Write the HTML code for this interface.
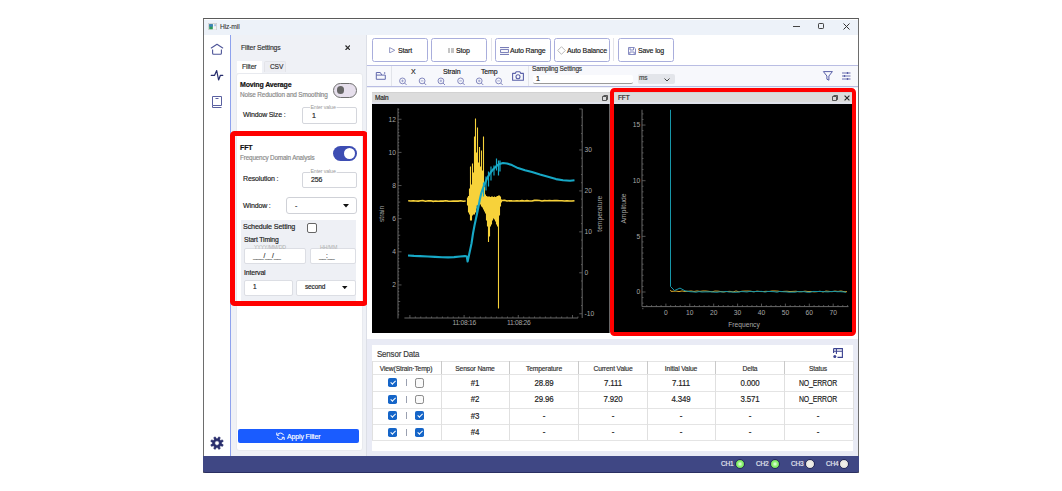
<!DOCTYPE html>
<html><head><meta charset="utf-8">
<style>
*{box-sizing:border-box;margin:0;padding:0}
html,body{width:1062px;height:491px;overflow:hidden;background:#fff;font-family:"Liberation Sans",sans-serif;color:#222}
.a{position:absolute}
.t{position:absolute;white-space:nowrap;line-height:1;letter-spacing:-0.15px;-webkit-text-stroke:0.18px currentColor}
#win{left:203px;top:18px;width:655.8px;height:455px;border:1px solid #6d6d6d;border-top-color:#5a5a5a;background:#fff}
#title{left:204px;top:20px;width:654px;height:15px;background:#edf2f9}
#navline{left:230px;top:35px;width:1px;height:421px;background:#8ea2ee}
#fpanel{left:231px;top:35px;width:136px;height:421px;background:#eff1f6;border-right:1px solid #dcdfe7}
#main{left:367px;top:35px;width:491px;height:421px;background:#eef0f6}
#status{left:203px;top:456px;width:655.8px;height:16.5px;background:#3f4784;border-bottom:1px solid #2a2f62;border-radius:0 0 3px 3px}
.btn{background:#fff;border:1px solid #a9aedc;border-radius:2.5px}
.tb{font-size:7.6px;color:#1a1a1a;transform:scaleX(0.92);transform-origin:left;margin-top:0.1px}
.zi{width:6.2px;height:6.2px;border:1px solid #7d82bb;border-radius:50%}
.zi:before{content:"";position:absolute;left:1.1px;top:1.1px;width:2px;height:2px;border:0.8px solid #9da1cc;border-radius:50%}
.zi:after{content:"";position:absolute;left:4.6px;top:5.2px;width:2.6px;height:1px;background:#7d82bb;transform:rotate(45deg)}
.al{font-family:"Liberation Sans",sans-serif;font-size:6.7px;fill:#a8a8a8}
.cbon{width:9px;height:9px;background:#1565c8;border-radius:1.8px}
.cbon:after{content:"";position:absolute;left:2.1px;top:1.1px;width:4px;height:2.2px;border-left:1.1px solid #fff;border-bottom:1.1px solid #fff;transform:rotate(-45deg) translate(-0.5px,1.5px)}
.cboff{width:9.3px;height:9.3px;background:#fafafa;border:1px solid #8a8a8a;border-radius:2.2px}
</style></head><body>
<div id="win" class="a"></div>
<div id="title" class="a"></div>
<div id="navline" class="a"></div>
<div id="fpanel" class="a"></div>
<div id="main" class="a"></div>
<div id="status" class="a"></div>
<!-- title content -->
<svg class="a" style="left:207.5px;top:22.5px" width="9" height="7.5" viewBox="0 0 9 7.5"><rect x="0.4" y="0.4" width="8.2" height="6.7" fill="#f4f4f4" stroke="#cfcfcf" stroke-width="0.8"/><rect x="1.2" y="1.2" width="3.6" height="5.1" fill="#2f9a5a"/><rect x="1.2" y="1.2" width="3.6" height="2.4" fill="#3d7fc0"/><rect x="6.6" y="1.2" width="0.9" height="2" fill="#5a8fd0"/></svg>
<div class="t" style="left:219.5px;top:23px;font-size:7.3px;color:#333;-webkit-text-stroke:0.1px currentColor;transform:scaleX(0.917);transform-origin:left">Hiz-mil</div>
<div class="a" style="left:793px;top:26px;width:7px;height:1px;background:#444"></div>
<div class="a" style="left:817.8px;top:22.8px;width:6.4px;height:6.4px;border:1px solid #444;border-radius:1.2px"></div>
<svg class="a" style="left:842.5px;top:22.8px" width="7" height="7" viewBox="0 0 7 7"><path d="M0.5 0.5L6.5 6.5M6.5 0.5L0.5 6.5" stroke="#333" stroke-width="1"/></svg>


<!-- nav icons -->
<svg class="a" style="left:204px;top:38px" width="26" height="74" viewBox="204 38 26 74">
<path d="M211.3 48L217 44.2L222.7 48" fill="none" stroke="#4e5598" stroke-width="1.1" stroke-linejoin="round" stroke-linecap="round"/>
<path d="M212.6 49.5V53.3Q212.6 54.3 213.6 54.3H220.4Q221.4 54.3 221.4 53.3V49.5" fill="none" stroke="#4e5598" stroke-width="1.1"/>
<path d="M211.2 75.3H214.6L216.7 70.6L218.6 80L220.4 75.3H222.8" fill="none" stroke="#262c6c" stroke-width="1.2" stroke-linejoin="round" stroke-linecap="round"/>
<path d="M212.5 96.5H221.5V105.5H212.5Z" fill="none" stroke="#5a60a0" stroke-width="1"/>
<path d="M212.5 105.5V107.5H221.5" fill="none" stroke="#5a60a0" stroke-width="1"/>
<path d="M215.5 98.5H218.5" fill="none" stroke="#5a60a0" stroke-width="1"/>
</svg>
<svg class="a" style="left:209px;top:435px" width="16" height="16" viewBox="209 435 16 16"><path fill="#282d6c" fill-rule="evenodd" stroke="#282d6c" stroke-width="0.7" stroke-linejoin="round" d="M221.44 443.80 L223.17 444.79 L222.56 446.27 L220.64 445.75 L219.65 446.74 L220.17 448.66 L218.69 449.27 L217.70 447.54 L216.30 447.54 L215.31 449.27 L213.83 448.66 L214.35 446.74 L213.36 445.75 L211.44 446.27 L210.83 444.79 L212.56 443.80 L212.56 442.40 L210.83 441.41 L211.44 439.93 L213.36 440.45 L214.35 439.46 L213.83 437.54 L215.31 436.93 L216.30 438.66 L217.70 438.66 L218.69 436.93 L220.17 437.54 L219.65 439.46 L220.64 440.45 L222.56 439.93 L223.17 441.41 L221.44 442.40ZM219.30 443.10A2.3 2.3 0 1 0 214.70 443.10A2.3 2.3 0 1 0 219.30 443.10Z"/></svg>

<!-- filter panel -->
<div class="t" style="left:240.7px;top:43.66px;font-size:7.41px;color:#333;transform:scaleX(0.917);transform-origin:left">Filter Settings</div>
<svg class="a" style="left:344.8px;top:44.5px" width="5.5" height="5.5" viewBox="0 0 5.5 5.5"><path d="M0.5 0.5L5 5M5 0.5L0.5 5" stroke="#2a2a2a" stroke-width="1.2"/></svg>
<div class="a" style="left:237px;top:60.7px;width:25.2px;height:12.5px;background:#fff"></div>
<div class="t" style="left:242.3px;top:63.06px;font-size:7.52px;color:#333;transform:scaleX(0.917);transform-origin:left">Filter</div>
<div class="a" style="left:263.9px;top:60.7px;width:22.4px;height:11.8px;background:#edeef3;border:1px solid #e3e4e9;border-bottom:0;border-radius:2px 2px 0 0"></div>
<div class="t" style="left:269.6px;top:63.08px;font-size:7.19px;color:#333;transform:scaleX(0.917);transform-origin:left">CSV</div>
<div class="a" style="left:236px;top:72.5px;width:127px;height:378.5px;background:#fff;border:1px solid #e8eaef;border-radius:3px"></div>

<div class="t" style="left:240px;top:80.5px;font-size:7px;font-weight:bold;color:#111">Moving Average</div>
<div class="t" style="left:240.2px;top:90.68px;font-size:6.98px;color:#8a8a8a;transform:scaleX(0.917);transform-origin:left">Noise Reduction and Smoothing</div>
<div class="a" style="left:332.8px;top:82.9px;width:24.2px;height:14.7px;border-radius:7.4px;background:#e6dfec;border:1.4px solid #6e6e6e"></div>
<div class="a" style="left:336.5px;top:86.3px;width:7.4px;height:7.4px;border-radius:50%;background:#666"></div>
<div class="t" style="left:242.7px;top:111.25px;font-size:7.63px;color:#222;transform:scaleX(0.917);transform-origin:left">Window Size :</div>
<div class="a" style="left:302px;top:107px;width:55px;height:17px;border:1px solid #d4d6dc;border-radius:2px;background:#fff"></div>
<div class="t" style="left:310px;top:104.64px;font-size:5.78px;color:#999;background:#fff;padding:0 0.5px;-webkit-text-stroke:0;transform:scaleX(0.917);transform-origin:left">Enter value</div>
<div class="t" style="left:312px;top:111.65px;font-size:7.63px;color:#222;transform:scaleX(0.917);transform-origin:left">1</div>

<!-- FFT section -->
<div class="t" style="left:240px;top:143.5px;font-size:7px;font-weight:bold;color:#111">FFT</div>
<div class="t" style="left:240.2px;top:155.29px;font-size:6.87px;color:#8a8a8a;transform:scaleX(0.917);transform-origin:left">Frequency Domain Analysis</div>
<div class="a" style="left:333px;top:145.6px;width:24px;height:15px;border-radius:7.5px;background:#3d4db3"></div>
<div class="a" style="left:343.5px;top:147.6px;width:11px;height:11px;border-radius:50%;background:#fff"></div>
<div class="t" style="left:243px;top:174.65px;font-size:7.63px;color:#222;transform:scaleX(0.917);transform-origin:left">Resolution :</div>
<div class="a" style="left:302px;top:172px;width:55px;height:16px;border:1px solid #d4d6dc;border-radius:2px;background:#fff"></div>
<div class="t" style="left:310px;top:169.04px;font-size:5.78px;color:#999;background:#fff;padding:0 0.5px;-webkit-text-stroke:0;transform:scaleX(0.917);transform-origin:left">Enter value</div>
<div class="t" style="left:311px;top:176.15px;font-size:7.63px;color:#222;transform:scaleX(0.917);transform-origin:left">256</div>
<div class="t" style="left:243px;top:201.65px;font-size:7.63px;color:#222;transform:scaleX(0.917);transform-origin:left">Window :</div>
<div class="a" style="left:286px;top:197px;width:71px;height:17px;border:1px solid #cfd1d7;border-radius:3px;background:#fff"></div>
<div class="t" style="left:295px;top:201.65px;font-size:7.63px;color:#222;transform:scaleX(0.917);transform-origin:left">-</div>
<svg class="a" style="left:343.2px;top:204.3px" width="6" height="3.5" viewBox="0 0 7 4"><path d="M0 0H7L3.5 4Z" fill="#111"/></svg>

<div class="a" style="left:241px;top:220px;width:115px;height:81px;background:#eef0f5"></div>
<div class="t" style="left:243px;top:223.44px;font-size:7.85px;color:#222;transform:scaleX(0.917);transform-origin:left">Schedule Setting</div>
<div class="a" style="left:307px;top:223px;width:10px;height:10px;border:1.2px solid #666;border-radius:2px;background:#fff"></div>
<div class="t" style="left:244px;top:236.16px;font-size:7.41px;color:#222;transform:scaleX(0.917);transform-origin:left">Start Timing</div>
<div class="a" style="left:244px;top:248px;width:62px;height:16px;border:1px solid #dcdee4;border-radius:2px;background:#fff"></div>
<div class="t" style="left:252.5px;top:244.94px;font-size:5.78px;color:#b0b0b0;padding:0 1px;-webkit-text-stroke:0;transform:scaleX(0.917);transform-origin:left">YYYY/MM/DD</div>
<div class="t" style="left:252.5px;top:253.18px;font-size:7.09px;color:#333;transform:scaleX(0.917);transform-origin:left">___/__/__</div>
<div class="a" style="left:310px;top:248px;width:46px;height:16px;border:1px solid #dcdee4;border-radius:2px;background:#fff"></div>
<div class="t" style="left:318.5px;top:244.94px;font-size:5.78px;color:#b0b0b0;padding:0 1px;-webkit-text-stroke:0;transform:scaleX(0.917);transform-origin:left">HH/MM</div>
<div class="t" style="left:319px;top:253.18px;font-size:7.09px;color:#333;transform:scaleX(0.917);transform-origin:left">__:__</div>
<div class="t" style="left:244px;top:269.06px;font-size:7.52px;color:#222;transform:scaleX(0.917);transform-origin:left">Interval</div>
<div class="a" style="left:244px;top:279.5px;width:49px;height:16.2px;border:1px solid #dcdee4;border-radius:2px;background:#fff"></div>
<div class="t" style="left:253px;top:283.68px;font-size:7.09px;color:#222;transform:scaleX(0.917);transform-origin:left">1</div>
<div class="a" style="left:296px;top:279.5px;width:60px;height:16.2px;border:1px solid #dcdee4;border-radius:2px;background:#fff"></div>
<div class="t" style="left:305px;top:284.18px;font-size:7.09px;color:#222;transform:scaleX(0.917);transform-origin:left">second</div>
<svg class="a" style="left:342.3px;top:286px" width="5.5" height="3.2" viewBox="0 0 7 4"><path d="M0 0H7L3.5 4Z" fill="#111"/></svg>

<div class="a" style="left:230.3px;top:131px;width:137.8px;height:175px;border:5px solid #ff0000;border-radius:4.5px"></div>

<div class="a" style="left:238px;top:429px;width:121px;height:14px;background:#1a5cff;border-radius:2px"></div>
<svg class="a" style="left:275.5px;top:431.8px" width="9" height="8.5" viewBox="0 0 9 8.5"><path d="M1.6 2.6A3.4 3.4 0 0 1 7.6 3.2M7.4 5.9A3.4 3.4 0 0 1 1.4 5.3" fill="none" stroke="#fff" stroke-width="1"/><path d="M0.8 0.6V3.2H3.2M8.2 7.9V5.3H5.8" fill="none" stroke="#fff" stroke-width="1"/></svg>
<div class="t" style="left:286.7px;top:433.15px;font-size:7.63px;color:#fff;transform:scaleX(0.917);transform-origin:left">Apply Filter</div>


<!-- toolbar -->
<div class="a" style="left:367px;top:35px;width:491px;height:31px;background:#fff;border-bottom:1px solid #b9bde3"></div>
<div class="a" style="left:367px;top:66px;width:491px;height:21px;background:#f7f8fc;border-bottom:1px solid #b9bde3"></div>
<div class="a" style="left:367px;top:87.5px;width:491px;height:2px;background:#fff"></div>
<div class="a btn" style="left:372px;top:38px;width:56px;height:23.5px"></div>
<div class="a btn" style="left:431px;top:38px;width:56px;height:23.5px"></div>
<div class="a" style="left:490.5px;top:38px;width:1px;height:23px;background:#e4e5ea"></div>
<div class="a btn" style="left:495px;top:38px;width:56px;height:23.5px"></div>
<div class="a btn" style="left:554px;top:38px;width:56px;height:23.5px"></div>
<div class="a" style="left:613px;top:38px;width:1px;height:23px;background:#e4e5ea"></div>
<div class="a btn" style="left:618px;top:38px;width:55.5px;height:23.5px"></div>
<svg class="a" style="left:388.8px;top:46.8px" width="6.5" height="6.5" viewBox="0 0 6.5 6.5"><path d="M0.6 0.6L5.8 3.25L0.6 5.9Z" fill="none" stroke="#8a8fc0" stroke-width="0.9" stroke-linejoin="round"/></svg>
<div class="t tb" style="left:397.5px;top:47px">Start</div>
<div class="a" style="left:448px;top:47.5px;width:2.2px;height:5.5px;background:#c4c4c4"></div>
<div class="a" style="left:451.4px;top:47.5px;width:2.2px;height:5.5px;background:#c4c4c4"></div>
<div class="t tb" style="left:456px;top:47px">Stop</div>
<svg class="a" style="left:499.5px;top:46.5px" width="9" height="8" viewBox="0 0 9 8"><path d="M0 0.6H9M0 7.4H9" stroke="#6a70b0" stroke-width="1"/><rect x="0.6" y="2.6" width="7.8" height="2.8" fill="none" stroke="#6a70b0" stroke-width="0.9"/></svg>
<div class="t tb" style="left:510px;top:47px">Auto Range</div>
<svg class="a" style="left:556.5px;top:46px" width="9" height="9" viewBox="0 0 9 9"><path d="M4.5 0.7L8.3 4.5L4.5 8.3L0.7 4.5Z" fill="none" stroke="#b0b0b0" stroke-width="0.9"/></svg>
<div class="t tb" style="left:566.5px;top:47px">Auto Balance</div>
<svg class="a" style="left:627.5px;top:46.5px" width="8" height="8" viewBox="0 0 8 8"><path d="M0.5 0.5H6.2L7.5 1.8V7.5H0.5Z M2 0.5V3H5.5V0.5 M1.8 7.5V5H6.2V7.5" fill="none" stroke="#7a80bb" stroke-width="0.9"/></svg>
<div class="t tb" style="left:637.5px;top:47px">Save log</div>

<svg class="a" style="left:372px;top:66px" width="20" height="20" viewBox="372 66 20 20"><path d="M376.3 79.3V72.5H380.3L381.8 75.1H385.3V79.3Z M376.3 75.1H381.8" fill="none" stroke="#5d63aa" stroke-width="0.95" stroke-linejoin="round"/><circle cx="384.6" cy="72.9" r="0.75" fill="#5d63aa"/></svg>
<div class="a" style="left:391px;top:66px;width:1px;height:20px;background:#e2e4ea"></div>
<div class="t tb" style="left:410.5px;top:68px">X</div>
<div class="t tb" style="left:443px;top:68px">Strain</div>
<div class="t tb" style="left:481px;top:68px">Temp</div>
<svg class="a" style="left:395px;top:74px" width="112" height="14" viewBox="395 74 112 14"><path d="M405.40 80.9A2.9 2.9 0 1 0 399.60 80.9A2.9 2.9 0 1 0 405.40 80.9Z M404.60 83.00L406.60 85.00M425.00 80.9A2.9 2.9 0 1 0 419.20 80.9A2.9 2.9 0 1 0 425.00 80.9Z M424.20 83.00L426.20 85.00M443.80 80.9A2.9 2.9 0 1 0 438.00 80.9A2.9 2.9 0 1 0 443.80 80.9Z M443.00 83.00L445.00 85.00M463.50 80.9A2.9 2.9 0 1 0 457.70 80.9A2.9 2.9 0 1 0 463.50 80.9Z M462.70 83.00L464.70 85.00M482.10 80.9A2.9 2.9 0 1 0 476.30 80.9A2.9 2.9 0 1 0 482.10 80.9Z M481.30 83.00L483.30 85.00M501.50 80.9A2.9 2.9 0 1 0 495.70 80.9A2.9 2.9 0 1 0 501.50 80.9Z M500.70 83.00L502.70 85.00" fill="none" stroke="#7d82bb" stroke-width="0.95"/><path d="M401.20 80.9H403.80M402.5 79.60V82.20M420.80 80.9H423.40M439.60 80.9H442.20M440.90000000000003 79.60V82.20M459.30 80.9H461.90M477.90 80.9H480.50M479.20000000000005 79.60V82.20M497.30 80.9H499.90" fill="none" stroke="#9297c6" stroke-width="0.8"/></svg>
<svg class="a" style="left:512px;top:71px" width="12" height="10" viewBox="0 0 12 10"><path d="M0.6 2.4H3.2L4.2 0.7H7.8L8.8 2.4H11.4V9.3H0.6Z" fill="none" stroke="#5a60a8" stroke-width="1.1" stroke-linejoin="round"/><circle cx="6" cy="5.8" r="2" fill="none" stroke="#5a60a8" stroke-width="1.1"/></svg>
<div class="a" style="left:528px;top:66px;width:1px;height:20px;background:#e2e4ea"></div>
<div class="t" style="left:532.2px;top:66.08px;font-size:7.09px;color:#333;transform:scaleX(0.917);transform-origin:left">Sampling Settings</div>
<div class="a" style="left:533px;top:74.5px;width:100px;height:9px;background:#fff;border-bottom:1px solid #9a9a9a;border-radius:2px"></div>
<div class="t" style="left:535.5px;top:74.65px;font-size:7.63px;color:#222;transform:scaleX(0.917);transform-origin:left">1</div>
<div class="a" style="left:637.5px;top:74px;width:37px;height:10px;background:#e3e5ea;border-radius:2px"></div>
<div class="t" style="left:639px;top:75.18px;font-size:7.09px;color:#444;transform:scaleX(0.917);transform-origin:left">ms</div>
<svg class="a" style="left:664px;top:77.5px" width="6" height="4" viewBox="0 0 6 4"><path d="M0.5 0.5L3 3L5.5 0.5" fill="none" stroke="#333" stroke-width="0.9"/></svg>
<svg class="a" style="left:820px;top:68px" width="36" height="16" viewBox="820 68 36 16"><path d="M823.4 71.6H832.4L828.9 76V80.2L826.9 79.2V76Z" fill="none" stroke="#5a60a8" stroke-width="1" stroke-linejoin="round"/><path d="M842 73H850.5M842 76H850.5M842 79H850.5" stroke="#5a60a8" stroke-width="0.9"/><path d="M847.5 72V74M844.5 75V77M847.5 78V80" stroke="#5a60a8" stroke-width="1.3"/></svg>


<!-- chart panels -->
<div class="a" style="left:367px;top:87.5px;width:491px;height:251.5px;background:#fff"></div>
<div class="a" style="left:372px;top:92px;width:238px;height:11.8px;background:#dcdcdc;border-top:1px solid #d2d2d2;border-bottom:2px solid #e0e2eb"></div>
<div class="t" style="left:375px;top:94.8px;font-size:7.09px;color:#222;transform:scaleX(0.917);transform-origin:left">Main</div>
<svg class="a" style="left:602px;top:94.5px" width="6" height="6" viewBox="0 0 6 6"><path d="M1.5 0.5H5.5V4.5H4.5M0.5 1.5H4.5V5.5H0.5Z" fill="none" stroke="#333" stroke-width="0.8"/></svg>
<div class="a" style="left:613px;top:92px;width:240px;height:11.8px;background:#dcdcdc;border-top:1px solid #d2d2d2;border-bottom:2px solid #e0e2eb"></div>
<div class="t" style="left:617.5px;top:94.8px;font-size:7.09px;color:#222;transform:scaleX(0.917);transform-origin:left">FFT</div>
<svg class="a" style="left:832px;top:94.5px" width="6" height="6" viewBox="0 0 6 6"><path d="M1.5 0.5H5.5V4.5H4.5M0.5 1.5H4.5V5.5H0.5Z" fill="none" stroke="#333" stroke-width="0.8"/></svg>
<svg class="a" style="left:844px;top:95px" width="6" height="6" viewBox="0 0 6 6"><path d="M0.6 0.6L5.4 5.4M5.4 0.6L0.6 5.4" stroke="#222" stroke-width="1.1"/></svg>
<!-- charts -->
<svg class="a" style="left:372px;top:103.5px" width="237.6" height="229.9" viewBox="372 103.5 237.6 229.9">
<rect x="372" y="103.5" width="237.6" height="229.9" fill="#000"/>
<path d="M398 107.7V318" stroke="#686868" stroke-width="1" fill="none"/>
<path d="M398 314.29h1.2M398 310.97h1.2M398 307.66h1.2M398 304.34h1.2M398 301.03h2.2M398 297.72h1.2M398 294.4h1.2M398 291.09h1.2M398 287.77h1.2M398 284.46h3.5M398 281.15h1.2M398 277.83h1.2M398 274.52h1.2M398 271.2h1.2M398 267.89h2.2M398 264.58h1.2M398 261.26h1.2M398 257.95h1.2M398 254.63h1.2M398 251.32h3.5M398 248.01h1.2M398 244.69h1.2M398 241.38h1.2M398 238.06h1.2M398 234.75h2.2M398 231.44h1.2M398 228.12h1.2M398 224.81h1.2M398 221.49h1.2M398 218.18h3.5M398 214.87h1.2M398 211.55h1.2M398 208.24h1.2M398 204.92h1.2M398 201.61h2.2M398 198.3h1.2M398 194.98h1.2M398 191.67h1.2M398 188.35h1.2M398 185.04h3.5M398 181.73h1.2M398 178.41h1.2M398 175.1h1.2M398 171.78h1.2M398 168.47h2.2M398 165.16h1.2M398 161.84h1.2M398 158.53h1.2M398 155.21h1.2M398 151.9h3.5M398 148.59h1.2M398 145.27h1.2M398 141.96h1.2M398 138.64h1.2M398 135.33h2.2M398 132.02h1.2M398 128.7h1.2M398 125.39h1.2M398 122.07h1.2M398 118.76h3.5M398 115.45h1.2M398 112.13h1.2M398 108.82h1.2" stroke="#686868" stroke-width="0.8" fill="none"/>
<text x="396" y="286.76" text-anchor="end" class="al">2</text>
<text x="396" y="253.62" text-anchor="end" class="al">4</text>
<text x="396" y="220.48" text-anchor="end" class="al">6</text>
<text x="396" y="187.34" text-anchor="end" class="al">8</text>
<text x="396" y="154.2" text-anchor="end" class="al">10</text>
<text x="396" y="121.06" text-anchor="end" class="al">12</text>
<path d="M582.2 108.3V317.5" stroke="#686868" stroke-width="1" fill="none"/>
<path d="M582.2 313.25h-3M582.2 305.06h-1.2M582.2 296.87h-1.2M582.2 288.68h-1.2M582.2 280.49h-1.2M582.2 272.3h-3M582.2 264.11h-1.2M582.2 255.92h-1.2M582.2 247.73h-1.2M582.2 239.54h-1.2M582.2 231.35h-3M582.2 223.16h-1.2M582.2 214.97h-1.2M582.2 206.78h-1.2M582.2 198.59h-1.2M582.2 190.4h-3M582.2 182.21h-1.2M582.2 174.02h-1.2M582.2 165.83h-1.2M582.2 157.64h-1.2M582.2 149.45h-3M582.2 141.26h-1.2M582.2 133.07h-1.2M582.2 124.88h-1.2M582.2 116.69h-1.2M582.2 108.5h-3" stroke="#686868" stroke-width="0.8" fill="none"/>
<text x="584.5" y="151.75" class="al">30</text>
<text x="584.5" y="192.7" class="al">20</text>
<text x="584.5" y="233.65" class="al">10</text>
<text x="584.5" y="274.6" class="al">0</text>
<text x="584.5" y="315.55" class="al">-10</text>
<path d="M404.4 317.5H578" stroke="#686868" stroke-width="1" fill="none"/>
<path d="M409.9 317.5v-3M415.32 317.5v-1.5M420.74 317.5v-1.5M426.16 317.5v-1.5M431.58 317.5v-1.5M437 317.5v-1.5M442.42 317.5v-1.5M447.84 317.5v-1.5M453.26 317.5v-1.5M458.68 317.5v-1.5M464.1 317.5v-3M469.52 317.5v-1.5M474.94 317.5v-1.5M480.36 317.5v-1.5M485.78 317.5v-1.5M491.2 317.5v-1.5M496.62 317.5v-1.5M502.04 317.5v-1.5M507.46 317.5v-1.5M512.88 317.5v-1.5M518.3 317.5v-3M523.72 317.5v-1.5M529.14 317.5v-1.5M534.56 317.5v-1.5M539.98 317.5v-1.5M545.4 317.5v-1.5M550.82 317.5v-1.5M556.24 317.5v-1.5M561.66 317.5v-1.5M567.08 317.5v-1.5M572.5 317.5v-3M577.92 317.5v-1.5" stroke="#686868" stroke-width="0.8" fill="none"/>
<text x="464.2" y="325" text-anchor="middle" class="al" letter-spacing="-0.25">11:08:16</text>
<text x="518.7" y="325" text-anchor="middle" class="al" letter-spacing="-0.25">11:08:26</text>
<text transform="translate(383.6 213.4) rotate(-90)" text-anchor="middle" class="al">strain</text>
<text transform="translate(602.3 213.2) rotate(-90)" text-anchor="middle" class="al">temperature</text>
<path d="M408.2 200.32 410.7 200.53 413.2 200.41 415.7 200.57 418.2 200.59 420.7 200.2 423.2 200.16 425.7 200.74 428.2 200.33 430.7 200.31 433.2 200.85 435.7 200.48 438.2 200.74 440.7 200.48 443.2 200.6 445.7 200.26 448.2 200.59 450.7 200.76 453.2 200.52 455.7 200.67 458.2 200.62 460.7 200.19 463.2 200.68 465.7 200.56 M501 200.3 502 200.04 504.5 199.82 507 200.49 509.5 200.18 512 200.38 514.5 200.5 517 200.37 519.5 200.54 522 200.12 524.5 200.44 527 200.16 529.5 200.55 532 200.5 534.5 199.88 537 199.91 539.5 199.97 542 200.57 544.5 200.15 547 200.3 549.5 200.04 552 200.21 554.5 200.11 557 200.08 559.5 200.27 562 200.27 564.5 200.52 567 200.35 569.5 200.54 572 200.49 574.5 200.2" fill="none" stroke="#f7d23a" stroke-width="1.6" stroke-linejoin="round"/>
<path d="M467.5 197V205M468.5 195.5V212M469.5 188V214M470.5 166V220M471.5 184V220M472.5 163V215M473.5 172V214M474.5 136V214M475.5 118V212M476.5 152V208M477.5 127V205M478.5 162V203M479.5 146.5V202M480.5 166V204M481.5 150V206M482.5 170V207M483.5 136V209M484.5 186V211M485.5 194V213M486.5 195.5V220M487.5 196V226M488.5 196V241.5M489.5 196V236M490.5 196.5V226M491.5 196V224M492.5 196V220M493.5 196.5V218M494.5 196V219M495.5 196.5V221M496.5 196V224M497.5 195.5V226M498.5 195V308M499.5 195V215M500.5 196V206M501.5 199V202" fill="none" stroke="#f7d23a" stroke-width="1.1"/>
<path d="M408 255 414 255.4 420 255.6 428 256 435 256.4 442 256.8 448 256.9 454 256.6 460 256 465 255.6 466.8 256 467.6 261 468.5 257 470 250 471.5 243 473 233 474.5 225 476 218 477.3 212 478.5 206 479.8 199 481.2 193 482.5 189 484 185 485.5 181.5 487 178 489 174.5 491 171.5 493 169 495 167 497 165 499.5 163.5 503 162.5 507 163 512 164.6 518 167.6 525 169.8 532 171.5 540 174 548 176.3 556 178.6 563 179.8 570 180.3 574.5 179.7" fill="none" stroke="#17a8c6" stroke-width="2.1" stroke-linejoin="round"/>
<path d="M477 205V214M483.5 182V196M486 176V190M488.5 171V186M491 166V180M494 165V175M496.5 158V170M498.5 160V175M500 160V171" fill="none" stroke="#17a8c6" stroke-width="1.2"/>
</svg>
<svg class="a" style="left:613px;top:103.5px" width="239" height="229" viewBox="613 103.5 239 229">
<rect x="613" y="103.5" width="239" height="229" fill="#000"/>
<path d="M642 109.3V306.1H848.5" stroke="#686868" stroke-width="1" fill="none"/>
<path d="M642 308.19h1.5M642 302.63h1.5M642 297.06h1.5M642 291.5h3.5M642 285.94h1.5M642 280.37h1.5M642 274.81h1.5M642 269.24h1.5M642 263.68h1.5M642 258.11h1.5M642 252.54h1.5M642 246.98h1.5M642 241.41h1.5M642 235.85h3.5M642 230.28h1.5M642 224.72h1.5M642 219.16h1.5M642 213.59h1.5M642 208.02h1.5M642 202.46h1.5M642 196.89h1.5M642 191.33h1.5M642 185.76h1.5M642 180.2h3.5M642 174.63h1.5M642 169.07h1.5M642 163.5h1.5M642 157.94h1.5M642 152.38h1.5M642 146.81h1.5M642 141.24h1.5M642 135.68h1.5M642 130.11h1.5M642 124.55h3.5M642 118.98h1.5M642 113.42h1.5M646.78 306.1v-1.5M651.56 306.1v-1.5M656.34 306.1v-1.5M661.12 306.1v-1.5M665.9 306.1v-3M670.68 306.1v-1.5M675.46 306.1v-1.5M680.24 306.1v-1.5M685.02 306.1v-1.5M689.8 306.1v-3M694.58 306.1v-1.5M699.36 306.1v-1.5M704.14 306.1v-1.5M708.92 306.1v-1.5M713.7 306.1v-3M718.48 306.1v-1.5M723.26 306.1v-1.5M728.04 306.1v-1.5M732.82 306.1v-1.5M737.6 306.1v-3M742.38 306.1v-1.5M747.16 306.1v-1.5M751.94 306.1v-1.5M756.72 306.1v-1.5M761.5 306.1v-3M766.28 306.1v-1.5M771.06 306.1v-1.5M775.84 306.1v-1.5M780.62 306.1v-1.5M785.4 306.1v-3M790.18 306.1v-1.5M794.96 306.1v-1.5M799.74 306.1v-1.5M804.52 306.1v-1.5M809.3 306.1v-3M814.08 306.1v-1.5M818.86 306.1v-1.5M823.64 306.1v-1.5M828.42 306.1v-1.5M833.2 306.1v-3M837.98 306.1v-1.5M842.76 306.1v-1.5M847.54 306.1v-1.5" stroke="#686868" stroke-width="0.8" fill="none"/>
<text x="640.3" y="126.95" text-anchor="end" class="al">15</text>
<text x="640.3" y="182.6" text-anchor="end" class="al">10</text>
<text x="640.3" y="238.25" text-anchor="end" class="al">5</text>
<text x="640.3" y="293.9" text-anchor="end" class="al">0</text>
<text x="665.9" y="314.6" text-anchor="middle" class="al">0</text>
<text x="689.8" y="314.6" text-anchor="middle" class="al">10</text>
<text x="713.7" y="314.6" text-anchor="middle" class="al">20</text>
<text x="737.6" y="314.6" text-anchor="middle" class="al">30</text>
<text x="761.5" y="314.6" text-anchor="middle" class="al">40</text>
<text x="785.4" y="314.6" text-anchor="middle" class="al">50</text>
<text x="809.3" y="314.6" text-anchor="middle" class="al">60</text>
<text x="833.2" y="314.6" text-anchor="middle" class="al">70</text>
<text transform="translate(626 208) rotate(-90)" text-anchor="middle" class="al">Amplitude</text>
<text x="744" y="326.5" text-anchor="middle" class="al">Frequency</text>
<path d="M670.5 289.5 671.2 291 673 290.76 676 290.57 679 291.12 682 290.48 685 290.99 688 290.8 691 290.46 694 290.96 697 290.44 700 290.88 703 290.48 706 290.5 709 290.87 712 291.31 715 290.54 718 290.65 721 291.09 724 291.44 727 291.03 730 290.84 733 291.47 736 290.45 739 291.34 742 290.72 745 290.56 748 290.53 751 290.74 754 291.3 757 290.6 760 291.04 763 291.1 766 290.81 769 291 772 290.47 775 290.47 778 290.63 781 291.15 784 290.87 787 290.75 790 291.04 793 290.9 796 290.73 799 291.27 802 291.17 805 290.67 808 291.03 811 290.98 814 291.36 817 291.2 820 290.72 823 291.48 826 290.53 829 290.86 832 291.23 835 290.57 838 290.94 841 290.44 844 291.14 847 291.24" fill="none" stroke="#d9a92a" stroke-width="1"/>
<path d="M670.5 109.3 670.5 286 674.5 290 680 287.6 685 290.3 690 291.2 693 291.37 696 291.68 699 291.11 702 291.5 705 291.39 708 291.38 711 291.26 714 291.64 717 291.74 720 291.27 723 291.46 726 290.86 729 291.5 732 291.45 735 291.79 738 291.62 741 291.08 744 291.19 747 291.47 750 290.82 753 291.26 756 290.97 759 290.92 762 290.86 765 291.57 768 290.93 771 291.05 774 291.19 777 291.67 780 290.88 783 291.25 786 291.35 789 291.68 792 291.62 795 291.66 798 291.08 801 291.22 804 291.16 807 291.68 810 291.76 813 290.95 816 290.98 819 291.03 822 291.03 825 291.28 828 291.39 831 291.06 834 290.8 837 291.22 840 291.17 843 291.37 846 291.75" fill="none" stroke="#1796a8" stroke-width="1"/>
</svg>
<!-- /charts -->
<div class="a" style="left:610.2px;top:88px;width:245.6px;height:248px;border:4.9px solid #ff0000;border-radius:4.5px"></div>

<!-- table -->
<div class="a" style="left:367px;top:339px;width:491px;height:117px;background:#e9ebf5"></div>
<div class="a" style="left:371.8px;top:344.8px;width:481.6px;height:106.3px;background:#fff"></div>
<div class="t" style="left:377.2px;top:349.81px;font-size:8.61px;color:#3a3a3a;transform:scaleX(0.917);transform-origin:left">Sensor Data</div>
<svg class="a" style="left:832.5px;top:347.5px" width="10" height="11" viewBox="0 0 10 11"><path d="M0.6 0.6H9.4V9.4H4.5M0.6 3.2H9.4M3.4 0.6V6M0.6 0.6V5" fill="none" stroke="#3b4290" stroke-width="1.1"/><circle cx="1.8" cy="8.6" r="1.5" fill="#3b4290"/></svg>
<div class="a" style="left:371.5px;top:361px;width:481.0px;height:1px;background:#e4e4e4"></div>
<div class="a" style="left:371.5px;top:374.4px;width:481.0px;height:1px;background:#e4e4e4"></div>
<div class="a" style="left:371.5px;top:391px;width:481.0px;height:1px;background:#e4e4e4"></div>
<div class="a" style="left:371.5px;top:407.5px;width:481.0px;height:1px;background:#e4e4e4"></div>
<div class="a" style="left:371.5px;top:424px;width:481.0px;height:1px;background:#e4e4e4"></div>
<div class="a" style="left:371.5px;top:440.3px;width:481.0px;height:1px;background:#e4e4e4"></div>
<div class="a" style="left:371.5px;top:361px;width:1px;height:79.3px;background:#e0e0e0"></div>
<div class="a" style="left:440.5px;top:361px;width:1px;height:79.3px;background:#e0e0e0"></div>
<div class="a" style="left:509px;top:361px;width:1px;height:79.3px;background:#e0e0e0"></div>
<div class="a" style="left:578px;top:361px;width:1px;height:79.3px;background:#e0e0e0"></div>
<div class="a" style="left:647px;top:361px;width:1px;height:79.3px;background:#e0e0e0"></div>
<div class="a" style="left:715.2px;top:361px;width:1px;height:79.3px;background:#e0e0e0"></div>
<div class="a" style="left:784px;top:361px;width:1px;height:79.3px;background:#e0e0e0"></div>
<div class="a" style="left:852.5px;top:361px;width:1px;height:79.3px;background:#e0e0e0"></div>
<div class="a" style="left:440.5px;top:361px;width:1.3px;height:13.4px;background:#c9c9c9"></div>
<div class="a" style="left:509px;top:361px;width:1.3px;height:13.4px;background:#c9c9c9"></div>
<div class="a" style="left:578px;top:361px;width:1.3px;height:13.4px;background:#c9c9c9"></div>
<div class="a" style="left:647px;top:361px;width:1.3px;height:13.4px;background:#c9c9c9"></div>
<div class="a" style="left:715.2px;top:361px;width:1.3px;height:13.4px;background:#c9c9c9"></div>
<div class="a" style="left:784px;top:361px;width:1.3px;height:13.4px;background:#c9c9c9"></div>
<div class="t" style="left:372.0px;width:68px;text-align:center;top:364.8px;font-size:7.3px;color:#333;transform:scaleX(0.917);transform-origin:center">View(Strain·Temp)</div>
<div class="t" style="left:440.8px;width:68px;text-align:center;top:364.8px;font-size:7.3px;color:#333;transform:scaleX(0.917);transform-origin:center">Sensor Name</div>
<div class="t" style="left:509.5px;width:68px;text-align:center;top:364.8px;font-size:7.3px;color:#333;transform:scaleX(0.917);transform-origin:center">Temperature</div>
<div class="t" style="left:578.5px;width:68px;text-align:center;top:364.8px;font-size:7.3px;color:#333;transform:scaleX(0.917);transform-origin:center">Current Value</div>
<div class="t" style="left:647.1px;width:68px;text-align:center;top:364.8px;font-size:7.3px;color:#333;transform:scaleX(0.917);transform-origin:center">Initial Value</div>
<div class="t" style="left:715.6px;width:68px;text-align:center;top:364.8px;font-size:7.3px;color:#333;transform:scaleX(0.917);transform-origin:center">Delta</div>
<div class="t" style="left:784.2px;width:68px;text-align:center;top:364.8px;font-size:7.3px;color:#333;transform:scaleX(0.917);transform-origin:center">Status</div>
<div class="a cbon" style="left:388.2px;top:378.4px"></div>
<div class="a" style="left:405.5px;top:379.2px;width:0.8px;height:7px;background:#9aa0b0"></div>
<div class="a cboff" style="left:415.2px;top:378.4px"></div>
<div class="t" style="left:440.8px;width:68px;text-align:center;top:378.61px;font-size:8.61px;color:#222;transform:scaleX(0.917);transform-origin:center">#1</div>
<div class="t" style="left:509.5px;width:68px;text-align:center;top:378.61px;font-size:8.61px;color:#222;transform:scaleX(0.917);transform-origin:center">28.89</div>
<div class="t" style="left:578.5px;width:68px;text-align:center;top:378.61px;font-size:8.61px;color:#222;transform:scaleX(0.917);transform-origin:center">7.111</div>
<div class="t" style="left:647.1px;width:68px;text-align:center;top:378.61px;font-size:8.61px;color:#222;transform:scaleX(0.917);transform-origin:center">7.111</div>
<div class="t" style="left:715.6px;width:68px;text-align:center;top:378.61px;font-size:8.61px;color:#222;transform:scaleX(0.917);transform-origin:center">0.000</div>
<div class="t" style="left:784.2px;width:68px;text-align:center;top:378.61px;font-size:8.61px;color:#222;transform:scaleX(0.8);transform-origin:center">NO_ERROR</div>
<div class="a cbon" style="left:388.2px;top:394.9px"></div>
<div class="a" style="left:405.5px;top:395.8px;width:0.8px;height:7px;background:#9aa0b0"></div>
<div class="a cboff" style="left:415.2px;top:394.9px"></div>
<div class="t" style="left:440.8px;width:68px;text-align:center;top:395.21px;font-size:8.61px;color:#222;transform:scaleX(0.917);transform-origin:center">#2</div>
<div class="t" style="left:509.5px;width:68px;text-align:center;top:395.21px;font-size:8.61px;color:#222;transform:scaleX(0.917);transform-origin:center">29.96</div>
<div class="t" style="left:578.5px;width:68px;text-align:center;top:395.21px;font-size:8.61px;color:#222;transform:scaleX(0.917);transform-origin:center">7.920</div>
<div class="t" style="left:647.1px;width:68px;text-align:center;top:395.21px;font-size:8.61px;color:#222;transform:scaleX(0.917);transform-origin:center">4.349</div>
<div class="t" style="left:715.6px;width:68px;text-align:center;top:395.21px;font-size:8.61px;color:#222;transform:scaleX(0.917);transform-origin:center">3.571</div>
<div class="t" style="left:784.2px;width:68px;text-align:center;top:395.21px;font-size:8.61px;color:#222;transform:scaleX(0.8);transform-origin:center">NO_ERROR</div>
<div class="a cbon" style="left:388.2px;top:411.4px"></div>
<div class="a" style="left:405.5px;top:412.2px;width:0.8px;height:7px;background:#9aa0b0"></div>
<div class="a cbon" style="left:415.2px;top:411.4px"></div>
<div class="t" style="left:440.8px;width:68px;text-align:center;top:411.71px;font-size:8.61px;color:#222;transform:scaleX(0.917);transform-origin:center">#3</div>
<div class="t" style="left:509.5px;width:68px;text-align:center;top:411.71px;font-size:8.61px;color:#222;transform:scaleX(0.917);transform-origin:center">-</div>
<div class="t" style="left:578.5px;width:68px;text-align:center;top:411.71px;font-size:8.61px;color:#222;transform:scaleX(0.917);transform-origin:center">-</div>
<div class="t" style="left:647.1px;width:68px;text-align:center;top:411.71px;font-size:8.61px;color:#222;transform:scaleX(0.917);transform-origin:center">-</div>
<div class="t" style="left:715.6px;width:68px;text-align:center;top:411.71px;font-size:8.61px;color:#222;transform:scaleX(0.917);transform-origin:center">-</div>
<div class="t" style="left:784.2px;width:68px;text-align:center;top:411.71px;font-size:8.61px;color:#222;transform:scaleX(0.917);transform-origin:center">-</div>
<div class="a cbon" style="left:388.2px;top:427.8px"></div>
<div class="a" style="left:405.5px;top:428.6px;width:0.8px;height:7px;background:#9aa0b0"></div>
<div class="a cbon" style="left:415.2px;top:427.8px"></div>
<div class="t" style="left:440.8px;width:68px;text-align:center;top:428.01px;font-size:8.61px;color:#222;transform:scaleX(0.917);transform-origin:center">#4</div>
<div class="t" style="left:509.5px;width:68px;text-align:center;top:428.01px;font-size:8.61px;color:#222;transform:scaleX(0.917);transform-origin:center">-</div>
<div class="t" style="left:578.5px;width:68px;text-align:center;top:428.01px;font-size:8.61px;color:#222;transform:scaleX(0.917);transform-origin:center">-</div>
<div class="t" style="left:647.1px;width:68px;text-align:center;top:428.01px;font-size:8.61px;color:#222;transform:scaleX(0.917);transform-origin:center">-</div>
<div class="t" style="left:715.6px;width:68px;text-align:center;top:428.01px;font-size:8.61px;color:#222;transform:scaleX(0.917);transform-origin:center">-</div>
<div class="t" style="left:784.2px;width:68px;text-align:center;top:428.01px;font-size:8.61px;color:#222;transform:scaleX(0.917);transform-origin:center">-</div>
<!-- /table -->
<!-- status bar -->
<div class="t" style="left:721px;top:461.28px;font-size:7.09px;color:#e6e8f2;letter-spacing:-0.25px;transform:scaleX(0.917);transform-origin:left">CH1</div>
<div class="a" style="left:734.7px;top:459.1px;width:10px;height:10px;border-radius:50%;background:radial-gradient(circle at 50% 50%,#f2fff0 0%,#8af070 45%,#5fd548 100%);border:1.7px solid #242959"></div>
<div class="t" style="left:756px;top:461.28px;font-size:7.09px;color:#e6e8f2;letter-spacing:-0.25px;transform:scaleX(0.917);transform-origin:left">CH2</div>
<div class="a" style="left:769.8px;top:459.1px;width:10px;height:10px;border-radius:50%;background:radial-gradient(circle at 50% 50%,#f2fff0 0%,#8af070 45%,#5fd548 100%);border:1.7px solid #242959"></div>
<div class="t" style="left:791px;top:461.28px;font-size:7.09px;color:#e6e8f2;letter-spacing:-0.25px;transform:scaleX(0.917);transform-origin:left">CH3</div>
<div class="a" style="left:804.6px;top:459.1px;width:10px;height:10px;border-radius:50%;background:radial-gradient(circle at 50% 50%,#f4f3ee 0%,#e2e0d8 100%);border:1.7px solid #242959"></div>
<div class="t" style="left:826px;top:461.28px;font-size:7.09px;color:#e6e8f2;letter-spacing:-0.25px;transform:scaleX(0.917);transform-origin:left">CH4</div>
<div class="a" style="left:839.4px;top:459.1px;width:10px;height:10px;border-radius:50%;background:radial-gradient(circle at 50% 50%,#f4f3ee 0%,#e2e0d8 100%);border:1.7px solid #242959"></div>
</body></html>
